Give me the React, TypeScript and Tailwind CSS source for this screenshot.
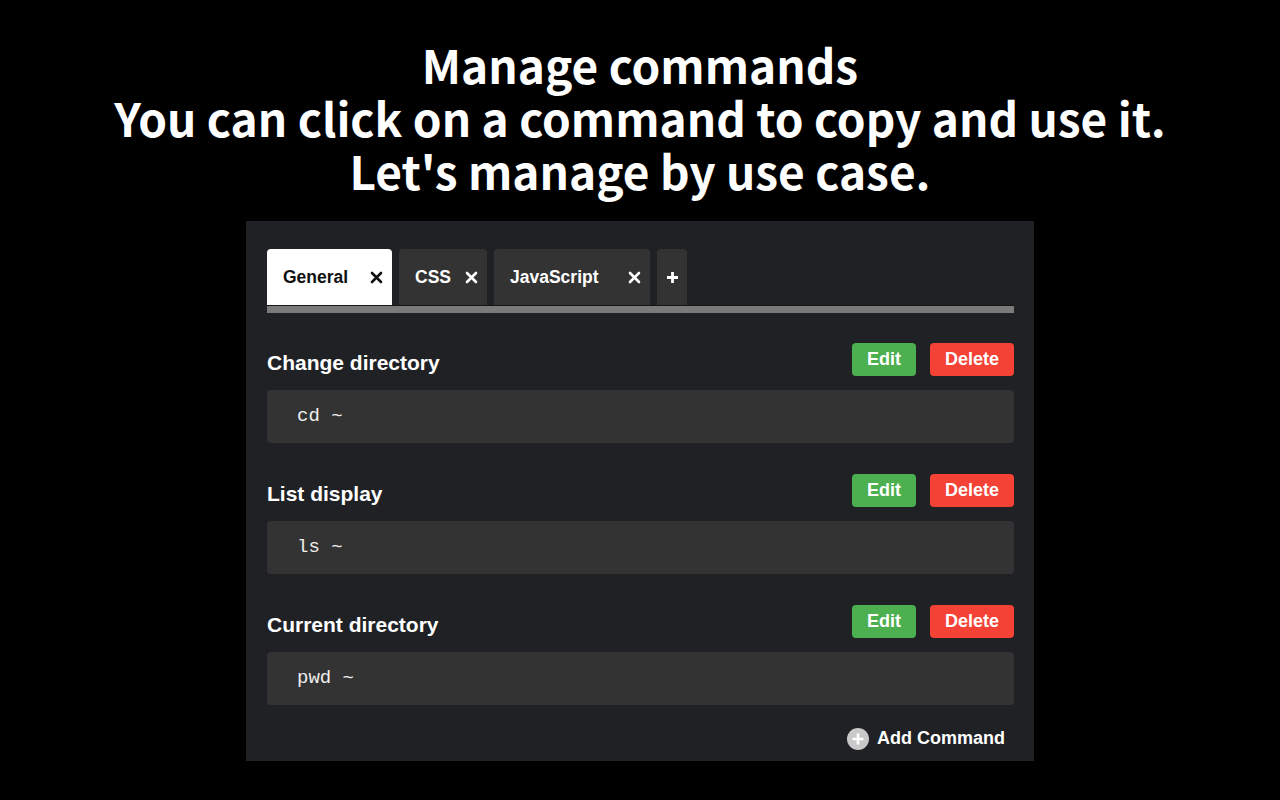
const tabs = [
  { name: "General", width: "w-[125px]", active: true },
  { name: "CSS", width: "w-[88px]", active: false },
  { name: "JavaScript", width: "w-[156px]", active: false },
];

const commands = [
  { title: "Change directory", cmd: "cd ~" },
  { title: "List display", cmd: "ls ~" },
  { title: "Current directory", cmd: "pwd ~" },
];

function CloseIcon() {
  return (
    <svg width="13" height="13" viewBox="0 0 13 13">
      <path d="M2 2 L11 11 M11 2 L2 11" stroke="currentColor" strokeWidth="2.6" strokeLinecap="round" />
    </svg>
  );
}

export default function App() {
  return (
    <main className="w-[1280px] h-[800px] bg-black flex flex-col items-center overflow-hidden">
      <h1
        className="mt-[38px] text-white text-center font-bold text-[46px] leading-[53px] flex flex-col items-center"
        style={{ fontFamily: '"Noto Sans CJK JP", "Noto Sans", sans-serif' }}
      >
        <span className="block h-[53px]">Manage commands</span>
        <span className="block h-[53px]">You can click on a command to copy and use it.</span>
        <span className="block h-[53px]">Let's manage by use case.</span>
      </h1>

      <div
        className="mt-[24px] w-[788px] h-[540px] bg-[#202125] pt-[28px] pl-[21px] pr-[20px]"
        style={{ fontFamily: '"Liberation Sans", Arial, sans-serif' }}
      >
        {/* Tabs */}
        <div className="flex gap-[7px] h-[56px]">
          {tabs.map((t) => (
            <div
              key={t.name}
              className={`${t.width} h-full flex items-center justify-between pl-[16px] pr-[9px] rounded-t-[4px] font-bold text-[17.5px] ${
                t.active ? "bg-white text-[#111]" : "bg-[#333333] text-white"
              }`}
            >
              <span>{t.name}</span>
              <CloseIcon />
            </div>
          ))}
          <div className="w-[30px] h-full flex items-center justify-center rounded-t-[4px] bg-[#333333] text-white">
            <svg width="13" height="13" viewBox="0 0 13 13">
              <path d="M6.5 1 V12 M1 6.5 H12" stroke="currentColor" strokeWidth="2.8" />
            </svg>
          </div>
        </div>
        <div className="h-[8px] bg-[#7a7a7a] border-t border-[#151515]" />

        {/* Commands */}
        <div className="flex flex-col gap-[31px] mt-[30px]">
          {commands.map((c) => (
            <div key={c.title}>
              <div className="flex items-end justify-between">
                <h2 className="text-white font-bold text-[21px] leading-[24px] mb-[1px]">{c.title}</h2>
                <div className="flex gap-[14px]">
                  <button className="w-[64px] h-[33px] rounded-[4px] bg-[#4caf50] text-white font-bold text-[18px]">
                    Edit
                  </button>
                  <button className="w-[84px] h-[33px] rounded-[4px] bg-[#f44336] text-white font-bold text-[18px]">
                    Delete
                  </button>
                </div>
              </div>
              <div
                className="mt-[14px] h-[53px] rounded-[4px] bg-[#333333] flex items-center pl-[30px] text-[#eeeeee] text-[19px]"
                style={{ fontFamily: '"Liberation Mono", "Courier New", monospace' }}
              >
                {c.cmd}
              </div>
            </div>
          ))}
        </div>

        {/* Add command */}
        <div className="flex justify-end items-center gap-[8px] mt-[20px] pr-[9px]">
          <svg width="22" height="22" viewBox="0 0 22 22">
            <circle cx="11" cy="11" r="11" fill="#c9c9c9" />
            <path d="M11 5.5 V16.5 M5.5 11 H16.5" stroke="#ffffff" strokeWidth="2.6" />
          </svg>
          <span className="text-white font-bold text-[18px]">Add Command</span>
        </div>
      </div>
    </main>
  );
}
